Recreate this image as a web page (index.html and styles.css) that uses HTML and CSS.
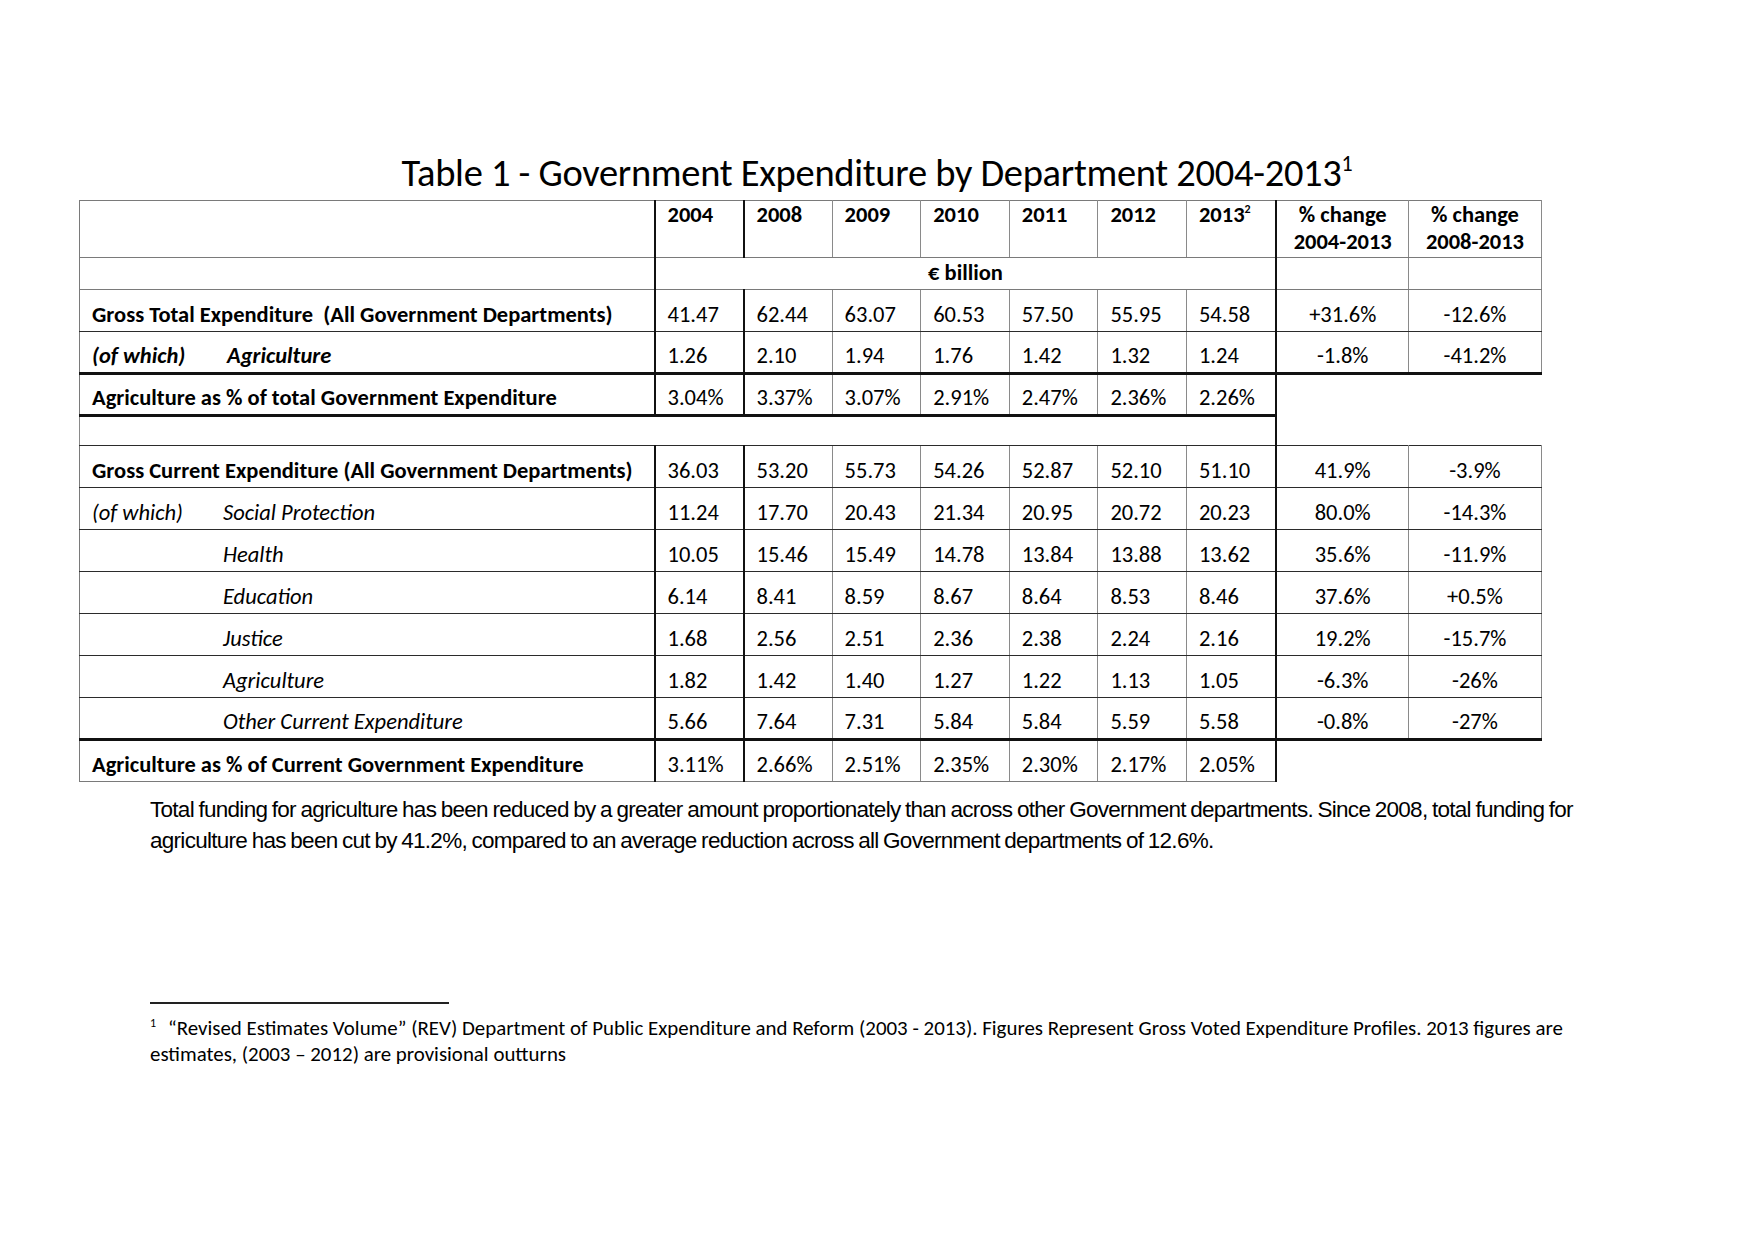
FILE: index.html
```html
<!DOCTYPE html>
<html lang="en">
<head>
<meta charset="utf-8">
<title>Table 1 - Government Expenditure by Department 2004-2013</title>
<link rel="stylesheet" href="styles.css">
</head>
<body>
<div class="page">
  <h1 class="title">Table 1 - Government Expenditure by Department 2004-2013<sup>1</sup></h1>
  <table class="grid">
    <colgroup>
      <col class="c-label">
      <col class="c-y1">
      <col class="c-y">
      <col class="c-y">
      <col class="c-y">
      <col class="c-y">
      <col class="c-y">
      <col class="c-y7">
      <col class="c-p1">
      <col class="c-p2">
    </colgroup>
    <tr class="head">
      <td class="lab"></td>
      <td class="tk">2004</td>
      <td class="tk">2008</td>
      <td>2009</td>
      <td>2010</td>
      <td>2011</td>
      <td>2012</td>
      <td>2013<sup>2</sup></td>
      <td class="tk pc">% change<br>2004-2013</td>
      <td class="pc">% change<br>2008-2013</td>
    </tr>
    <tr class="unit">
      <td class="lab"></td>
      <td class="tk eur" colspan="7">€ billion</td>
      <td class="tk"></td>
      <td></td>
    </tr>
    <tr class="data">
      <td class="lab b">Gross Total Expenditure &nbsp;(All Government Departments)</td>
      <td class="tk">41.47</td><td class="tk">62.44</td><td>63.07</td><td>60.53</td><td>57.50</td><td>55.95</td><td>54.58</td>
      <td class="tk pc">+31.6%</td><td class="pc">-12.6%</td>
    </tr>
    <tr class="data tb">
      <td class="lab b i"><span class="ofw ofw-b">(of which)</span>Agriculture</td>
      <td class="tk">1.26</td><td class="tk">2.10</td><td>1.94</td><td>1.76</td><td>1.42</td><td>1.32</td><td>1.24</td>
      <td class="tk pc">-1.8%</td><td class="pc">-41.2%</td>
    </tr>
    <tr class="data tb2">
      <td class="lab b">Agriculture as % of total Government Expenditure</td>
      <td class="tk">3.04%</td><td class="tk">3.37%</td><td>3.07%</td><td>2.91%</td><td>2.47%</td><td>2.36%</td><td>2.26%</td>
      <td class="tk x"></td><td class="x"></td>
    </tr>
    <tr class="gap">
      <td class="span" colspan="8"></td>
      <td class="tk x"></td><td class="x"></td>
    </tr>
    <tr class="data">
      <td class="lab b">Gross Current Expenditure (All Government Departments)</td>
      <td class="tk">36.03</td><td class="tk">53.20</td><td>55.73</td><td>54.26</td><td>52.87</td><td>52.10</td><td>51.10</td>
      <td class="tk pc">41.9%</td><td class="pc">-3.9%</td>
    </tr>
    <tr class="data">
      <td class="lab i"><span class="ofw">(of which)</span>Social Protection</td>
      <td class="tk">11.24</td><td class="tk">17.70</td><td>20.43</td><td>21.34</td><td>20.95</td><td>20.72</td><td>20.23</td>
      <td class="tk pc">80.0%</td><td class="pc">-14.3%</td>
    </tr>
    <tr class="data">
      <td class="lab i"><span class="ofw"></span>Health</td>
      <td class="tk">10.05</td><td class="tk">15.46</td><td>15.49</td><td>14.78</td><td>13.84</td><td>13.88</td><td>13.62</td>
      <td class="tk pc">35.6%</td><td class="pc">-11.9%</td>
    </tr>
    <tr class="data">
      <td class="lab i"><span class="ofw"></span>Education</td>
      <td class="tk">6.14</td><td class="tk">8.41</td><td>8.59</td><td>8.67</td><td>8.64</td><td>8.53</td><td>8.46</td>
      <td class="tk pc">37.6%</td><td class="pc">+0.5%</td>
    </tr>
    <tr class="data">
      <td class="lab i"><span class="ofw"></span>Justice</td>
      <td class="tk">1.68</td><td class="tk">2.56</td><td>2.51</td><td>2.36</td><td>2.38</td><td>2.24</td><td>2.16</td>
      <td class="tk pc">19.2%</td><td class="pc">-15.7%</td>
    </tr>
    <tr class="data">
      <td class="lab i"><span class="ofw"></span>Agriculture</td>
      <td class="tk">1.82</td><td class="tk">1.42</td><td>1.40</td><td>1.27</td><td>1.22</td><td>1.13</td><td>1.05</td>
      <td class="tk pc">-6.3%</td><td class="pc">-26%</td>
    </tr>
    <tr class="data tb">
      <td class="lab i"><span class="ofw"></span>Other Current Expenditure</td>
      <td class="tk">5.66</td><td class="tk">7.64</td><td>7.31</td><td>5.84</td><td>5.84</td><td>5.59</td><td>5.58</td>
      <td class="tk pc">-0.8%</td><td class="pc">-27%</td>
    </tr>
    <tr class="data last">
      <td class="lab b">Agriculture as % of Current Government Expenditure</td>
      <td class="tk">3.11%</td><td class="tk">2.66%</td><td>2.51%</td><td>2.35%</td><td>2.30%</td><td>2.17%</td><td>2.05%</td>
      <td class="tk x"></td><td class="x"></td>
    </tr>
  </table>
  <p class="note">Total funding for agriculture has been reduced by a greater amount proportionately than across other Government departments. Since 2008, total funding for agriculture has been cut by 41.2%, compared to an average reduction across all Government departments of 12.6%.</p>
  <div class="footnotes">
    <hr class="fn-rule">
    <p class="fn"><span class="fn-mark">1</span>“Revised Estimates Volume” (REV) Department of Public Expenditure and Reform (2003 - 2013). Figures Represent Gross Voted Expenditure Profiles. 2013 figures are estimates, (2003 – 2012) are provisional outturns</p>
  </div>
</div>
</body>
</html>
```

FILE: styles.css
```css
html, body {
  margin: 0;
  padding: 0;
  background: #ffffff;
}

.page {
  width: 1754px;
  min-height: 1240px;
  padding-top: 150px;
  box-sizing: border-box;
  color: #000;
  font-family: Carlito, Lato, "Open Sans", sans-serif;
}

.title {
  margin: 0;
  text-align: center;
  font-weight: normal;
  font-size: 38.5px;
  line-height: 45px;
  letter-spacing: -0.3px;
}

.title sup {
  font-size: 22px;
  vertical-align: 15px;
  line-height: 0;
}

.grid {
  margin: 5px 0 0 79px;
  width: 1462px;
  border-collapse: collapse;
  table-layout: fixed;
  font-size: 22.5px;
}

.c-label { width: 575px; }
.c-y1 { width: 89px; }
.c-y { width: 88.6px; }
.c-y7 { width: 90px; }
.c-p1 { width: 132px; }
.c-p2 { width: 133px; }

.grid td {
  padding: 0 0 3px 12px;
  vertical-align: bottom;
  white-space: nowrap;
  border-left: 1px solid #8a8a8a;
  border-right: 1px solid #8a8a8a;
  border-top: 1px solid #2b2b2b;
  border-bottom: 1px solid #2b2b2b;
  line-height: 26px;
}

.grid td.tk {
  border-left: 2px solid #111;
}

.grid tr.head td {
  vertical-align: top;
  padding-top: 0;
  padding-bottom: 0;
  font-weight: bold;
  border-top: 1px solid #7a7a7a;
  border-bottom: 1px solid #7a7a7a;
  line-height: 27px;
}

.grid tr.head { height: 57px; }

.grid tr.head sup {
  font-size: 12px;
  vertical-align: 9px;
  line-height: 0;
}

.grid tr.unit { height: 32px; }

.grid tr.unit td {
  border-bottom: 1px solid #7a7a7a;
  padding-bottom: 3px;
}

.grid td.eur {
  text-align: center;
  font-weight: bold;
  padding-left: 0;
}

.grid tr.data { height: 42px; }

.grid tr.tb td,
.grid tr.tb2 td {
  border-bottom: 3px solid #111;
}

.grid tr.gap { height: 30px; }

.grid tr.gap td.span {
  border-right: 2px solid #111;
  border-bottom: 1px solid #2b2b2b;
}

.grid td.x {
  border-top: none;
  border-right: none;
  border-bottom: none;
}

.grid td.x:not(.tk) {
  border-left: none;
}

.grid tr.last td {
  border-bottom: 1px solid #7a7a7a;
}

.grid tr.tb2 td.x,
.grid tr.last td.x {
  border-bottom: none;
}

.grid td.pc {
  text-align: center;
  padding-left: 0;
}

.grid td.lab {
  padding-left: 12px;
  border-left: 1px solid #7a7a7a;
}

.b { font-weight: bold; }
.i { font-style: italic; }

.ofw {
  display: inline-block;
  width: 131px;
}

.ofw-b {
  width: 135px;
}

.note {
  margin: 12px 0 0 150px;
  width: 1450px;
  font-family: "Liberation Sans Narrow", "Arial Narrow", "Liberation Sans", sans-serif;
  font-size: 22.5px;
  line-height: 31px;
  letter-spacing: -0.72px;
  word-spacing: -1px;
}

.footnotes {
  margin: 0 0 0 150px;
  padding-top: 146px;
}

.fn-rule {
  margin: 0;
  width: 299px;
  height: 0;
  border: none;
  border-top: 2px solid #222;
}

.fn {
  margin: 11px 0 0 0;
  width: 1440px;
  font-size: 20.9px;
  line-height: 26px;
}

.fn-mark {
  display: inline-block;
  width: 18px;
  font-size: 12px;
  line-height: 12px;
  vertical-align: top;
  padding-top: 2px;
}
```
